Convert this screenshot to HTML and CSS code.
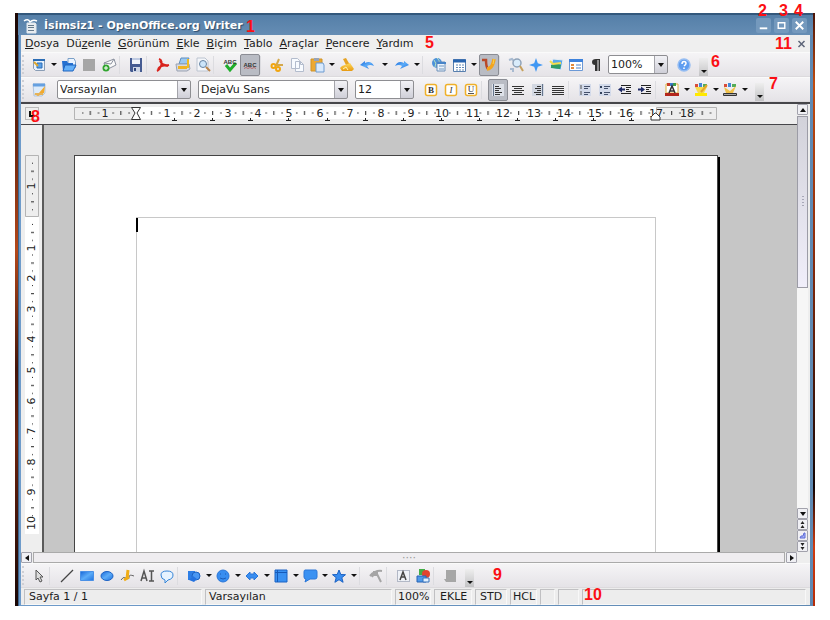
FILE: index.html
```html
<!DOCTYPE html>
<html lang="tr">
<head>
<meta charset="utf-8">
<meta name="viewport" content="width=device-width, initial-scale=1">
<title>İsimsiz1 - OpenOffice.org Writer</title>
<link rel="stylesheet" href="styles.css">
</head>
<body>
<svg class="defs" aria-hidden="true">
  <defs>
    <linearGradient id="blue" x1="0" y1="0" x2="1" y2="1"><stop offset="0" stop-color="#1565d8"/><stop offset=".5" stop-color="#5cacf8"/><stop offset="1" stop-color="#1f72e0"/></linearGradient>
    <linearGradient id="gold" x1="0" y1="0" x2="0" y2="1"><stop offset="0" stop-color="#ffd95a"/><stop offset="1" stop-color="#e79a12"/></linearGradient>
    <pattern id="ticks" x="0" y="0" width="30.6" height="12" patternUnits="userSpaceOnUse">
      <path d="M7 6h1.500M23 6h1.500" stroke="#222"/><path d="M15.500 4v4" stroke="#222"/>
    </pattern>
    <pattern id="vticks" x="0" y="0" width="14" height="30.6" patternUnits="userSpaceOnUse">
      <path d="M7 7.500h1M7 23.500h1" stroke="#222"/><path d="M6 15.500h3" stroke="#222"/>
    </pattern>
  </defs>
</svg>
<main class="window">
  <header class="titlebar">
    <svg class="i" viewBox="0 0 16 16"><path d="M4 5h8l1 1v9H4z" fill="#e9edf0" stroke="#dfe6ec"/><path d="M1 3q4-3 6 1q3-3 7-1" fill="none" stroke="#fff" stroke-width="1.500"/><path d="M5 7.500h6M5 9.500h6M5 12.500h6" stroke="#667b8c"/></svg>
    <h1>İsimsiz1 - OpenOffice.org Writer</h1>
    <button class="wbtn" aria-label="Simge durumuna küçült"><svg viewBox="0 0 16 16"><path d="M4 11h8" stroke="#fff" stroke-width="2"/></svg></button>
    <button class="wbtn" aria-label="Ekranı kapla"><svg viewBox="0 0 16 16"><path d="M4.500 5h7v6h-7zM4 5h8" fill="none" stroke="#fff" stroke-width="1.500"/></svg></button>
    <button class="wbtn" aria-label="Kapat"><svg viewBox="0 0 16 16"><path d="M4 4l8 8M12 4l-8 8" stroke="#fff" stroke-width="2"/></svg></button>
  </header>
  <nav class="menu">
    <a href="#"><u>D</u>osya</a><a href="#">Dü<u>z</u>enle</a><a href="#"><u>G</u>örünüm</a><a href="#"><u>E</u>kle</a><a href="#"><u>B</u>içim</a><a href="#"><u>T</u>ablo</a><a href="#"><u>A</u>raçlar</a><a href="#"><u>P</u>encere</a><a href="#"><u>Y</u>ardım</a>
    <button class="docclose" aria-label="Belgeyi kapat"><svg viewBox="0 0 8 8"><path d="M1 1l6 6M7 1L1 7" stroke="#5c6478" stroke-width="1.500"/></svg></button>
  </nav>

  <div class="bar" role="toolbar" aria-label="Standart">
    <span class="grip"></span>
    <button class="b" aria-label="Yeni"><svg viewBox="0 0 16 16"><path d="M2.500 2.500h11v11h-9l-2-2z" fill="#e8f2fc" stroke="#8a9db5"/><path d="M2 3h12" stroke="#2c6db5" stroke-width="2"/><path d="M6 6h5v5H6z" fill="#5aa0e6" stroke="#2a6cb8"/><path d="M3 5l4 4" stroke="#e0a72c" stroke-width="2"/></svg></button><button class="c" aria-label="Yeni menüsü"></button>
    <button class="b" aria-label="Aç"><svg viewBox="0 0 16 16"><path d="M7 1.500h6l1.500 3v6H7z" fill="#eaf4ff" stroke="#7ca0c8"/><path d="M1 4h5l1 2h5v8H2z" fill="#2570d0"/><path d="M4 8h11l-3 6H2z" fill="#64b0f8" stroke="#1e65c0"/></svg></button>
    <button class="b" aria-label="Kaydet" disabled><svg viewBox="0 0 16 16"><path d="M2 2h12v12H2z" fill="#a6a6a6"/></svg></button>
    <button class="b" aria-label="E-posta"><svg viewBox="0 0 16 16"><path d="M3 6l10-4 2 6-10 5z" fill="#fafafa" stroke="#8d93a0"/><path d="M3 6l7 1 3-5" fill="none" stroke="#8d93a0"/><circle cx="5" cy="11" r="3.500" fill="#31a52f"/><path d="M3 11h4M5 9v4" stroke="#fff"/></svg></button>
    <span class="s"></span>
    <button class="b" aria-label="Belgeyi kaydet"><svg viewBox="0 0 16 16"><path d="M2 1h12v14H3l-1-1z" fill="#465c92"/><path d="M4 1h8v6H4z" fill="#f2f5fa"/><path d="M5 10h7v5H5z" fill="#cfd7e6"/><path d="M6 11h2v3H6z" fill="#34487c"/><path d="M4 2h8" stroke="#8ea2cb"/></svg></button>
    <span class="s"></span>
    <button class="b" aria-label="PDF"><svg viewBox="0 0 16 16"><path d="M4 2c3 1 3 4 2 7s-2 4-4 5M5 4c1 3 5 5 9 4M3 12c2-3 6-4 10-3" fill="none" stroke="#d9231d" stroke-width="2"/></svg></button>
    <button class="b" aria-label="Yazdır"><svg viewBox="0 0 16 16"><path d="M6 1h8l-2 6H4z" fill="#9cc9f2" stroke="#5f8fbe"/><path d="M1 7h13l1 5-3 2H2z" fill="#d5dae4" stroke="#9aa2b2"/><path d="M3 9h9v3H3z" fill="#efb325"/><path d="M13 2v9" stroke="#eebb25" stroke-width="2"/></svg></button>
    <button class="b" aria-label="Önizleme"><svg viewBox="0 0 16 16"><path d="M2 1h8l3 3v10H2z" fill="#f4f6fa" stroke="#bcc4d0"/><circle cx="8" cy="7" r="3.500" fill="#cce5fa" stroke="#6683a2"/><path d="M11 10l4 4" stroke="#b9844a" stroke-width="2"/></svg></button>
    <span class="s"></span>
    <button class="b" aria-label="Yazım denetimi"><svg viewBox="0 0 16 16"><path d="M4 8l4 5 6-7" fill="none" stroke="#1fae2a" stroke-width="3"/><text x="8" y="7" class="abc">ABC</text></svg></button>
    <button class="b on" aria-label="Otomatik yazım denetimi"><svg viewBox="0 0 16 16"><text x="8" y="10" class="abc">ABC</text><path d="M2 11.500l2-1 2 1 2-1 2 1 2-1 2 1" fill="none" stroke="#b36a6a"/></svg></button>
    <span class="s"></span>
    <button class="b" aria-label="Kes"><svg viewBox="0 0 16 16"><path d="M10 2L7 9M14 8H6" stroke="#d4a84a" stroke-width="2"/><circle cx="4.500" cy="9" r="2" fill="none" stroke="#f0a510" stroke-width="2"/><circle cx="9" cy="12" r="2" fill="none" stroke="#f0a510" stroke-width="2"/></svg></button>
    <button class="b" aria-label="Kopyala"><svg viewBox="0 0 16 16"><path d="M2.500 1.500h6l2 2v8h-8zM6.500 4.500h5l3 3v7h-8z" fill="#f8fbff" stroke="#b3bccd"/><path d="M11.500 4.500v3h3" fill="none" stroke="#b3bccd"/></svg></button>
    <button class="b" aria-label="Yapıştır"><svg viewBox="0 0 16 16"><path d="M2 2h11v12H2z" fill="#eda932" stroke="#cf9428"/><path d="M5 1h5v3H5z" fill="#98a4b8"/><path d="M7 6h7l1 2v7H7z" fill="#d9eafd" stroke="#6d9bd0"/></svg></button><button class="c" aria-label="Yapıştır menüsü"></button>
    <button class="b" aria-label="Biçim fırçası"><svg viewBox="0 0 16 16"><path d="M4 2l3-1 4 7-3 2z" fill="#e5a326"/><path d="M3 9l8-3 4 6-2 2-10 0-2-3z" fill="url(#gold)"/><path d="M4 12l3-2 2 3" stroke="#fff3b0" fill="none"/></svg></button>
    <button class="b" aria-label="Geri al"><svg viewBox="0 0 16 16"><path d="M1 8l5-4v2q6-3 9 3q-4-2-7 0l2 3z" fill="url(#blue)"/></svg></button><button class="c w" aria-label="Geri al menüsü"></button>
    <button class="b" aria-label="Yinele"><svg viewBox="0 0 16 16"><path d="M15 8l-5-4v2q-6-3-9 3q4-2 7 0l-2 3z" fill="url(#blue)"/></svg></button><button class="c" aria-label="Yinele menüsü"></button>
    <span class="s"></span>
    <button class="b" aria-label="Köprü"><svg viewBox="0 0 16 16"><circle cx="6" cy="6" r="5" fill="#4c92da"/><path d="M3 3q3 3 1 7M6 1q5 4 0 10" stroke="#b7e1c0" fill="none"/><path d="M6 5h8v9H6z" fill="#eaf3fc" stroke="#6d8fb8"/><path d="M6 6h9" stroke="#4784c8" stroke-width="2"/><path d="M8 9h5M8 12h5" stroke="#7397bf"/></svg></button>
    <button class="b" aria-label="Tablo"><svg viewBox="0 0 16 16"><path d="M2.500 2.500h12v12h-12z" fill="#fff" stroke="#587fae"/><path d="M2 4h13" stroke="#2865b0" stroke-width="3"/><path d="M5 8h2M8 8h2M11 8h2M5 10.500h2M8 10.500h2M11 10.500h2M5 13h2M8 13h2M11 13h2" stroke="#6289b8"/></svg></button><button class="c" aria-label="Tablo menüsü"></button>
    <button class="b on" aria-label="Çizim işlevleri"><svg viewBox="0 0 16 16"><path d="M1 3h4q0 7 2 9" fill="none" stroke="#b8492a" stroke-width="2.500"/><path d="M13 2q-1 6-3 8t-4 2" fill="none" stroke="#f3a51e" stroke-width="3.500"/><path d="M13 2l-1 5" stroke="#f8d350"/></svg></button>
    <span class="s"></span>
    <button class="b" aria-label="Bul ve değiştir"><svg viewBox="0 0 16 16"><path d="M1 3l3-1 2 2M2 12h3v3" fill="none" stroke="#a8bad0" stroke-width="2"/><circle cx="9" cy="6" r="4" fill="#d9ecfb" stroke="#8ea2b8" stroke-width="1.500"/><path d="M12 9l3 5" stroke="#c6a05c" stroke-width="2"/></svg></button>
    <button class="b" aria-label="Gezgin"><svg viewBox="0 0 16 16"><path d="M8 1l1.800 5.200L15 8l-5.200 1.800L8 15l-1.800-5.200L1 8l5.200-1.800z" fill="#3f97f3"/></svg></button>
    <button class="b" aria-label="Galeri"><svg viewBox="0 0 16 16"><path d="M5 2l10 1-2 10-11-2z" fill="#5aa8ea" stroke="#e8edf2"/><path d="M3 8q5-3 10 0l-1 4-9-1z" fill="#2f9b65"/><path d="M2 4l3 3 8-1" stroke="#f5dd50" stroke-width="2" fill="none"/></svg></button>
    <button class="b" aria-label="Veri kaynakları"><svg viewBox="0 0 16 16"><path d="M1.500 2.500h13v11h-13z" fill="#fff" stroke="#6b99d6"/><path d="M1 3.500h14" stroke="#3d82dc" stroke-width="3"/><path d="M3 7h3v2H3zM3 10h3v2H3z" fill="#e08a3c"/><path d="M8 8h5M8 11h5" stroke="#4b83c9"/></svg></button>
    <button class="b" aria-label="Biçimlendirme işaretleri"><svg viewBox="0 0 16 16"><path d="M12 2v12h-1.500V3H9.500v11H7V8Q4 8 4 5t4-3z" fill="#333"/></svg></button>
    <label class="combo zoom"><select aria-label="Yakınlaştırma"><option>100%</option></select></label>
    <button class="b help" aria-label="Yardım"><svg viewBox="0 0 16 16"><circle cx="8" cy="8" r="6" fill="#5f9df0" stroke="#96bdf2" stroke-width="1.500"/><path d="M6 7q0-2.500 2-2.500t2 2q0 1-2 2.500M8 10.500v1.500" fill="none" stroke="#fff" stroke-width="1.500"/></svg></button>
    <button class="more" aria-label="Standart çubuğu seçenekleri"></button>
    <b class="note n6">6</b>
  </div>

  <div class="bar" role="toolbar" aria-label="Biçimlendirme">
    <span class="grip"></span>
    <button class="b" aria-label="Biçemler"><svg viewBox="0 0 16 16"><path d="M2 2h12v9l-3 3H3z" fill="#dcebfb" stroke="#b3c5db"/><path d="M2 3h12" stroke="#66a0e0" stroke-width="3"/><path d="M14 4L8 11l-5 1 4 2 6-3z" fill="#f2a92c"/><path d="M4 12h8" stroke="#e5b258" stroke-width="2"/></svg></button>
    <label class="combo style"><select aria-label="Biçem"><option>Varsayılan</option></select></label>
    <label class="combo font"><select aria-label="Yazı tipi"><option>DejaVu Sans</option></select></label>
    <label class="combo size"><select aria-label="Yazı boyutu"><option>12</option></select></label>
    <button class="b" aria-label="Kalın"><svg viewBox="0 0 16 16"><rect x="2.500" y="2.500" width="11" height="11" rx="2" fill="#fff" stroke="#efb02a" stroke-width="1.500"/><text x="8" y="11" class="biu bold">B</text></svg></button>
    <button class="b" aria-label="İtalik"><svg viewBox="0 0 16 16"><rect x="2.500" y="2.500" width="11" height="11" rx="2" fill="#fff" stroke="#efb02a" stroke-width="1.500"/><text x="8" y="11" class="biu ital">I</text></svg></button>
    <button class="b" aria-label="Altı çizili"><svg viewBox="0 0 16 16"><rect x="2.500" y="2.500" width="11" height="11" rx="2" fill="#fff" stroke="#efb02a" stroke-width="1.500"/><text x="8" y="10" class="biu">U</text><path d="M5 11.500h6" stroke="#555"/></svg></button>
    <span class="s"></span>
    <button class="b on" aria-label="Sola hizala"><svg viewBox="0 0 16 16"><path d="M2 2h12v12H2z" fill="#dde1e8"/><path d="M3.500 2v12" stroke="#65758c"/><path d="M5 4.500h4M5 6.500h6M5 8.500h4M5 10.500h7M5 12.500h5" stroke="#333"/></svg></button>
    <button class="b" aria-label="Ortala"><svg viewBox="0 0 16 16"><path d="M2 4.500h12M4 6.500h8M2 8.500h12M4 10.500h8M2 12.500h12" stroke="#333"/></svg></button>
    <button class="b" aria-label="Sağa hizala"><svg viewBox="0 0 16 16"><path d="M2 2h12v12H2z" fill="#d3d8e2"/><path d="M12.500 2v12" stroke="#65758c"/><path d="M7 4.500h4M5 6.500h6M7 8.500h4M4 10.500h7M6 12.500h5" stroke="#333"/></svg></button>
    <button class="b" aria-label="İki yana yasla"><svg viewBox="0 0 16 16"><path d="M2 4.500h12M2 6.500h12M2 8.500h12M2 10.500h12M2 12.500h12" stroke="#333"/></svg></button>
    <span class="s"></span>
    <button class="b" aria-label="Numaralandırma"><svg viewBox="0 0 16 16"><path d="M2 2h12v12H2z" fill="#d3daea"/><path d="M4 3v4M4 9v4" stroke="#555"/><path d="M7 4.500h6M7 6.500h4M7 10.500h6M7 12.500h4" stroke="#44506a"/></svg></button>
    <button class="b" aria-label="Madde imleri"><svg viewBox="0 0 16 16"><path d="M2 2h12v12H2z" fill="#d3daea"/><path d="M3 4h2v2H3zM3 10h2v2H3z" fill="#33425c"/><path d="M7 4.500h6M7 6.500h4M7 10.500h6M7 12.500h4" stroke="#44506a"/></svg></button>
    <button class="b" aria-label="Girintiyi azalt"><svg viewBox="0 0 16 16"><path d="M4 3.500h10M9 5.500h5M9 7.500h3M9 9.500h5M4 11.500h10" stroke="#222"/><path d="M1 7.500l4-3v2h3v2H5v2z" fill="#1f2a66"/></svg></button>
    <button class="b" aria-label="Girintiyi artır"><svg viewBox="0 0 16 16"><path d="M4 3.500h10M9 5.500h5M9 7.500h3M9 9.500h5M4 11.500h10" stroke="#222"/><path d="M8 7.500l-4-3v2H1v2h3v2z" fill="#1f2a66"/></svg></button>
    <span class="s"></span>
    <button class="b" aria-label="Yazı rengi"><svg viewBox="0 0 16 16"><path d="M2 2h12v9H2z" fill="#fff" stroke="#dcae3b"/><path d="M3 1h3v3H3z" fill="#c53b2a"/><path d="M6 1h3v3H6z" fill="#3a7ccd"/><path d="M9 1h3v3H9z" fill="#3fa048"/><path d="M5 11l3-7 3 7M6 9h4" fill="none" stroke="#333" stroke-width="1.500"/><path d="M1 11h14v3H1z" fill="#b3261c"/></svg></button><button class="c t" aria-label="Yazı rengi menüsü"></button>
    <button class="b" aria-label="Vurgulama"><svg viewBox="0 0 16 16"><path d="M2 2h3v3H2z" fill="#d84c3a"/><path d="M6 1h3v4H6z" fill="#4389d8"/><path d="M10 2h4v3h-4z" fill="#54ad58"/><path d="M2 5h12l-3 6H5z" fill="#f6dc50"/><path d="M14 3L8 10" stroke="#e6a62b" stroke-width="2"/><path d="M2 11h12v3H2z" fill="#ffe900"/></svg></button><button class="c t" aria-label="Vurgulama menüsü"></button>
    <button class="b" aria-label="Arka plan rengi"><svg viewBox="0 0 16 16"><path d="M2 2h3v3H2z" fill="#d84c3a"/><path d="M6 1h3v4H6z" fill="#4389d8"/><path d="M10 2h4v3h-4z" fill="#54ad58"/><path d="M2 5l6 4 6-5-3 7H4z" fill="#f0c14a"/><path d="M1.500 11.500h13v2h-13z" fill="#aaa" stroke="#333"/></svg></button><button class="c" aria-label="Arka plan menüsü"></button>
    <button class="more" aria-label="Biçimlendirme çubuğu seçenekleri"></button>
    <b class="note n7">7</b>
  </div>

  <section class="work">
    <div class="hruler">
      <span class="tabtype"><svg viewBox="0 0 8 8"><path d="M2 1v5h5" fill="none" stroke="#111" stroke-width="2"/></svg></span>
      <svg class="hscale" width="644" height="18" viewBox="0 0 644 18">
        <path d="M62 2h520v12H62z" fill="#fff"/>
        <path d="M.5 2.500h61v12H.5zM582.500 2.500h60v12h-60z" fill="#eee" stroke="#b4b4b4"/>
        <g transform="translate(62 2)"><path d="M-54 0h632v12H-54z" fill="url(#ticks)"/></g>
        <g id="hnums" class="num"></g>
        <path d="M57.500 2.500h9L63 8l3.500 6.500h-9L61 8zM582 8l4 4v3h-9v-3l4-4z" fill="#fff" stroke="#333"/>
      </svg>
    </div>
    <div class="vruler">
      <svg width="14" height="427" viewBox="0 0 14 427">
        <path d="M0 92h14v317H0z" fill="#fff"/>
        <path d="M.5 30.500h13v61H.5z" fill="#eee" stroke="#b4b4b4"/>
        <g transform="translate(0 92)"><path d="M0-60h14v372H0z" fill="url(#vticks)"/></g>
        <g id="vnums" class="num"></g>
      </svg>
    </div>
    <div class="canvas"><article class="page"><div class="frame" contenteditable="true" role="textbox" aria-label="Belge metni"><span class="cursor"></span></div></article></div>
    <div class="vscroll">
      <button class="sb up" aria-label="Yukarı"></button>
      <div class="vthumb"></div><div class="vtrack"></div>
      <button class="sb down" aria-label="Aşağı"></button>
      <button class="sb" aria-label="Önceki sayfa"><svg viewBox="0 0 9 9"><path d="M4.500 1L6.500 4h-4zM4.500 5L6.500 8h-4z" fill="#222"/></svg></button>
      <button class="sb" aria-label="Gezinme"><svg viewBox="0 0 9 9"><path d="M2 7l1-2h2l1-3h1v5H2z" fill="#a9b5f4" stroke="#5a68d8"/></svg></button>
      <button class="sb" aria-label="Sonraki sayfa"><svg viewBox="0 0 9 9"><path d="M4.500 4l2-3h-4zM4.500 8l2-3h-4z" fill="#222"/></svg></button>
    </div>
    <div class="hscroll">
      <button class="sb left" aria-label="Sola"></button><div class="hthumb">····</div><button class="sb right" aria-label="Sağa"></button>
    </div>
  </section>

  <div class="bar draw" role="toolbar" aria-label="Çizim">
    <span class="grip"></span>
    <button class="b" aria-label="Seç"><svg viewBox="0 0 16 16"><path d="M5 2v10l2-2 2 4 2-1-2-4h3z" fill="#ddd" stroke="#555"/></svg></button>
    <span class="s m"></span>
    <button class="b" aria-label="Çizgi"><svg viewBox="0 0 16 16"><path d="M2 14L14 2" stroke="#444" stroke-width="1.200"/></svg></button>
    <button class="b" aria-label="Dikdörtgen"><svg viewBox="0 0 16 16"><path d="M1.500 3.500h13v9h-13z" fill="url(#blue)" stroke="#4a90e6"/></svg></button>
    <button class="b" aria-label="Elips"><svg viewBox="0 0 16 16"><ellipse cx="8" cy="8" rx="6" ry="4.500" fill="url(#blue)" stroke="#1c62c4"/></svg></button>
    <button class="b" aria-label="Serbest çizgi"><svg viewBox="0 0 16 16"><path d="M2 12q2-4 5-2t3-1 5-1" fill="none" stroke="#666"/><path d="M9 2L8 11M5 12l5-3" stroke="#f0ad17" stroke-width="3"/></svg></button>
    <button class="b" aria-label="Metin"><svg viewBox="0 0 16 16"><path d="M2 13L5 3l3 10M3 10h4M10 3h5M10 13h5M12.500 3v10" fill="none" stroke="#555" stroke-width="1.500"/></svg></button>
    <button class="b" aria-label="Belirtme"><svg viewBox="0 0 16 16"><path d="M6 12q-4-1-4-5t6-4 6 4-5 5l-3 3z" fill="#e6f3ff" stroke="#3585d8"/></svg></button>
    <span class="s"></span>
    <button class="b" aria-label="Temel şekiller"><svg viewBox="0 0 16 16"><path d="M2 3h7v9H2z" fill="#2d7ee6"/><circle cx="10" cy="8" r="4" fill="#4997f3" stroke="#1b61c0"/><path d="M7 8l4 3-3 3-5-2z" fill="#2472df"/></svg></button><button class="c t" aria-label="Temel şekiller menüsü"></button>
    <button class="b" aria-label="Simge şekiller"><svg viewBox="0 0 16 16"><circle cx="8" cy="8" r="6" fill="#388df0" stroke="#2a76d8"/><path d="M5 6h1M10 6h1M5 10q3 2 6 0" fill="none" stroke="#1c5cb8"/></svg></button><button class="c t" aria-label="Simge şekiller menüsü"></button>
    <button class="b" aria-label="Blok oklar"><svg viewBox="0 0 16 16"><path d="M2 8l4-4v2h4V4l4 4-4 4v-2H6v2z" fill="#388df0" stroke="#2a76d8"/></svg></button><button class="c t" aria-label="Blok oklar menüsü"></button>
    <button class="b" aria-label="Akış şemaları"><svg viewBox="0 0 16 16"><path d="M2 2h12v12H2z" fill="#3a91f2" stroke="#1b62c4"/><path d="M4.500 2v12M2 4.500h12" stroke="#175ab8"/></svg></button><button class="c t" aria-label="Akış şemaları menüsü"></button>
    <button class="b" aria-label="Belirtme çizgileri"><svg viewBox="0 0 16 16"><path d="M3 2h11q1 0 1 2v5q0 2-2 2H8l-5 3 1-3q-2 0-2-2V4q0-2 1-2z" fill="#3a91f2" stroke="#2a76d8"/></svg></button><button class="c t" aria-label="Belirtme menüsü"></button>
    <button class="b" aria-label="Yıldızlar"><svg viewBox="0 0 16 16"><path d="M8 2l1.800 4.500 4.700.2-3.700 3 1.300 4.600L8 11.700l-4.100 2.600 1.300-4.600-3.700-3 4.700-.2z" fill="#388df0" stroke="#1b62c4"/></svg></button><button class="c" aria-label="Yıldızlar menüsü"></button>
    <span class="s"></span>
    <button class="b" aria-label="Noktalar" disabled><svg viewBox="0 0 16 16"><path d="M2 8q5-6 12-5M9 6l4 8M6 6L4 9" fill="none" stroke="#a5a5a5" stroke-width="2"/><path d="M5 3h5v5H5z" fill="#a5a5a5"/></svg></button>
    <span class="s"></span>
    <button class="b" aria-label="Fontwork"><svg viewBox="0 0 16 16"><rect x="2.500" y="2.500" width="12" height="11" fill="#eef1f7" stroke="#b2b8c6"/><path d="M5 12l3-8 3 8M6 9h4" fill="none" stroke="#444" stroke-width="1.500"/></svg></button>
    <button class="b" aria-label="Dosyadan"><svg viewBox="0 0 16 16"><path d="M4 1h6v6H4z" fill="#43ad45"/><circle cx="11" cy="6" r="4" fill="#e0442f"/><path d="M2 8h9v6H2z" fill="#4f99e9" stroke="#2863b2"/><path d="M8 10h6v4H8z" fill="#e2f0fd" stroke="#3873bb"/></svg></button>
    <span class="s"></span>
    <button class="b" aria-label="Yığma" disabled><svg viewBox="0 0 16 16"><path d="M4 2h10v12H4l-2-3h2z" fill="#a6a6a6"/></svg></button>
    <button class="more" aria-label="Çizim çubuğu seçenekleri"></button>
    <b class="note n9">9</b>
  </div>

  <footer class="status">
    <span class="pg">Sayfa 1 / 1</span><span class="st">Varsayılan</span><span class="z">100%</span><span class="k">EKLE</span><span class="d">STD</span><span class="h">HCL</span><span class="e"></span><span class="f"></span><span class="r"></span>
    <b class="note n10">10</b>
  </footer>
  <b class="note n1">1</b><b class="note n2">2</b><b class="note n3">3</b><b class="note n4">4</b><b class="note n5">5</b><b class="note n8">8</b><b class="note n11">11</b>
</main>
<script src="ruler.js"></script>
</body>
</html>
```
FILE: styles.css
```css
* { box-sizing: border-box; }
body {
  margin: 0;
  min-height: 100vh;
  padding: 13px 15px 14px;
  display: flex;
  background: #fff;
  color: #1c1c1c;
  font: 11px/16px "DejaVu Sans", sans-serif;
}
button { margin: 0; padding: 0; border: 0; background: none; color: inherit; font: inherit; }
svg { display: block; flex: none; }
.defs { position: absolute; width: 0; height: 0; }
.window {
  position: relative;
  flex: 1;
  min-width: 0;
  display: flex;
  flex-direction: column;
  padding: 0 5px 1px 6px;
  background:
    linear-gradient(#1d0805, #1d0805 6%, #64210c 20%, #b4481a 40%, #431408 60%, #6b220c 72%, #180605) 0 0 / 3px 100% no-repeat,
    linear-gradient(#4a1408, #c04c10 12%, #8c2c0c 40%, #120404 80%, #d03c10 90%, #b42c08) 100% 0 / 2px 100% no-repeat,
    linear-gradient(90deg, #3c648c 0 4px, #6e9bca 4px, #5f89b2);
}
.titlebar {
  height: 22px;
  margin: 0 -3px;
  padding: 1px 6px 0 5px;
  display: flex;
  align-items: center;
  border-top: 2px solid #33587c;
  background: linear-gradient(#557fa8, #658db4);
}
.titlebar .i { width: 16px; height: 16px; }
.titlebar h1 {
  flex: 1;
  margin: 0 0 0 5px;
  color: #fff;
  font-size: 11px;
  line-height: 16px;
  text-shadow: 1px 1px 1px #2c4a68;
}
.wbtn { width: 15px; height: 15px; margin-left: 3px; border-radius: 2px; background: #7499bd; }
.wbtn svg { width: 15px; height: 15px; }
.menu {
  height: 17px;
  padding: 0 4px;
  display: flex;
  gap: 7px;
  align-items: center;
  background: #efefef;
}
.menu a { color: inherit; text-decoration: none; }
.docclose { margin-left: auto; }
.docclose svg { width: 9px; height: 8px; }
.bar {
  position: relative;
  height: 25px;
  display: flex;
  align-items: center;
  border-top: 1px solid #fafafa;
  border-bottom: 1px solid #dcdadd;
  background: linear-gradient(#f5f4f6, #e5e3e7);
}
.bar > * { flex: none; }
.grip { width: 3px; height: 19px; margin: 0 4px 0 1px; border-left: 2px dotted #cfcfd4; }
.b { width: 20px; height: 20px; display: grid; place-items: center; }
.b svg { width: 16px; height: 16px; }
.on { height: 22px; background: #b9bcc4; border: 1px solid #8b8d94; border-radius: 2px; }
.c { width: 10px; height: 20px; display: grid; place-items: center; }
.c::before, .combo::after, .more::before {
  content: "";
  border: 3px solid transparent;
  border-top-color: #111;
  border-bottom-width: 0;
}
.c.w { width: 15px; }
.c.t { width: 9px; }
.s { width: 7px; height: 18px; border-left: 1px solid #dcdce0; }
.s.m { width: 8px; }
.abc { font: bold 6px "Liberation Sans", sans-serif; text-anchor: middle; fill: #333; }
.biu { font: 9px "Liberation Serif", serif; text-anchor: middle; fill: #333; }
.biu.bold { font-weight: bold; }
.biu.ital { font-style: italic; }
.combo {
  position: relative;
  height: 19px;
  border: 1px solid #8e8e92;
  border-radius: 2px;
  background:
    linear-gradient(#a4a4aa, #a4a4aa) calc(100% - 12px) 0 / 1px 100% no-repeat,
    linear-gradient(#f2f2f6, #cfcfd8) 100% 0 / 12px 100% no-repeat #fff;
}
.combo::after { position: absolute; right: 3px; top: 7px; border-top-width: 4px; }
.combo select {
  width: 100%;
  height: 17px;
  padding: 0 14px 0 2px;
  border: 0;
  appearance: none;
  background: none;
  color: inherit;
  font: inherit;
}
.zoom { width: 60px; margin-left: 2px; }
.style { width: 134px; margin-left: 8px; }
.font { width: 150px; margin-left: 7px; }
.size { width: 59px; margin: 0 7px; }
.help { margin: 0 5px 0 6px; }
.more { width: 9px; height: 18px; margin-top: 5px; background: linear-gradient(#eee, #c2c2c4); display: grid; place-items: end center; padding-bottom: 3px; }
.bar + .bar .more, .draw .more { margin-left: 5px; }

.work {
  flex: 1;
  display: grid;
  grid-template: 21px 1fr 11px / 21px 1fr 13px;
  border-top: 2px solid #46464a;
  background: #eee;
}
.hruler { grid-column: 1 / 3; display: flex; border-bottom: 1px solid #46464a; overflow: hidden; }
.hscale { margin-left: 35px; margin-top: 1px; }
.tabtype { width: 14px; height: 13px; margin: 3px 0 0 4px; border: 1px solid #bbb; display: grid; place-items: center; }
.tabtype svg { width: 8px; height: 8px; }
.num { font: 11px "DejaVu Sans", sans-serif; text-anchor: middle; fill: #222; }
.vruler { height: 0; min-height: 100%; padding-left: 4px; overflow: hidden; }
.canvas { padding: 30px 0 0 30px; border-left: 2px solid #5a5a5a; background: #c6c6c6; overflow: hidden; display: flex; }
.page {
  width: 644px;
  flex: none;
  padding: 61px 61px 0;
  display: flex;
  border: 1px solid #444;
  border-bottom: 0;
  background: #fff;
  box-shadow: 2px 2px 0 #000;
}
.frame { flex: 1; border: 1px solid #c8c8c8; border-bottom: 0; outline: 0; }
.cursor { display: block; width: 1px; height: 14px; background: #000; box-shadow: -1px 0 0 #000; }
.vscroll { grid-column: 3; grid-row: 1 / 3; display: flex; flex-direction: column; padding-right: 2px; }
.sb { width: 11px; height: 11px; border: 1px solid #a2a2ac; border-radius: 1px; background: #f0f0f4; display: grid; place-items: center; }
.sb svg { width: 9px; height: 9px; }
.vscroll .sb { flex: none; }
.up::before, .down::before, .left::before, .right::before { content: ""; border: 3px solid transparent; }
.up::before { border-bottom: 4px solid #111; border-top: 0; }
.down::before { border-top: 4px solid #111; border-bottom: 0; }
.left::before { border-right: 4px solid #111; border-left: 0; }
.right::before { border-left: 4px solid #111; border-right: 0; }
.vthumb { flex: 170; margin-top: 1px; border: 1px solid #9c9ca6; background: repeating-linear-gradient(#a8a8b8 0 1px, transparent 1px 3px) 50% 50% / 2px 12px no-repeat, linear-gradient(#d2d2da, #f0eefa); }
.vtrack { flex: 220; background: #f6f6f6; }
.hscroll { grid-column: 1 / 3; display: flex; }
.hthumb { flex: 1; margin: 0 1px; border: 1px solid #aaa; background: #efedf0; color: #999; text-align: center; line-height: 9px; overflow: hidden; }
.status { position: relative; height: 17px; padding: 1px 4px 0 3px; display: flex; gap: 3px; background: #ededed; }
.status span { flex: none; padding: 0 4px; border: 1px solid #c0c0c2; border-right-color: #f8f8f8; border-bottom-color: #f8f8f8; line-height: 14px; white-space: nowrap; }
.status .pg { width: 178px; }
.status .st { width: 187px; padding-left: 3px; }
.status .z { width: 36px; padding: 0 2px; }
.status .k { width: 38px; padding: 0 5px; }
.status .d { width: 32px; }
.status .h { width: 27px; padding: 0 2px; }
.status .e { width: 15px; }
.status .f { width: 21px; }
.status .r { flex: 1; }

.note { position: absolute; color: #fb0f14; font: bold 16px/16px "Liberation Sans", sans-serif; }
.n1 { left: 231px; top: 6px; }
.n2 { right: 48px; top: -10px; }
.n3 { right: 27px; top: -10px; }
.n4 { right: 12px; top: -10px; }
.n5 { left: 410px; top: 22px; }
.n6 { left: 690px; top: 1px; }
.n7 { left: 748px; top: -2px; }
.n8 { left: 16px; top: 96px; }
.n9 { left: 472px; top: 3px; }
.n10 { left: 563px; top: -1px; }
.n11 { right: 23px; top: 23px; }
```
FILE: ruler.js
```js
const NS = "http://www.w3.org/2000/svg";
const UNIT = 30.6;

function add(parent, name, attrs, text) {
  const el = document.createElementNS(NS, name);
  for (const key in attrs) el.setAttribute(key, attrs[key]);
  if (text !== undefined) el.textContent = text;
  parent.appendChild(el);
}

const h = document.getElementById("hnums");
for (let n = -1; n <= 18; n++) {
  if (n !== 0) add(h, "text", { x: Math.round(62 + n * UNIT), y: 12 }, Math.abs(n));
}
for (let t = 1; t <= 13; t++) {
  add(h, "path", { d: `M${Math.round(62 + t * 38.1) - 2} 16h5v-1h-2v-2h-1v2h-2z` });
}

const v = document.getElementById("vnums");
for (let n = -1; n <= 10; n++) {
  const y = Math.round(92 + n * UNIT);
  if (n !== 0) add(v, "text", { transform: `translate(10 ${y}) rotate(-90)` }, Math.abs(n));
}
```
